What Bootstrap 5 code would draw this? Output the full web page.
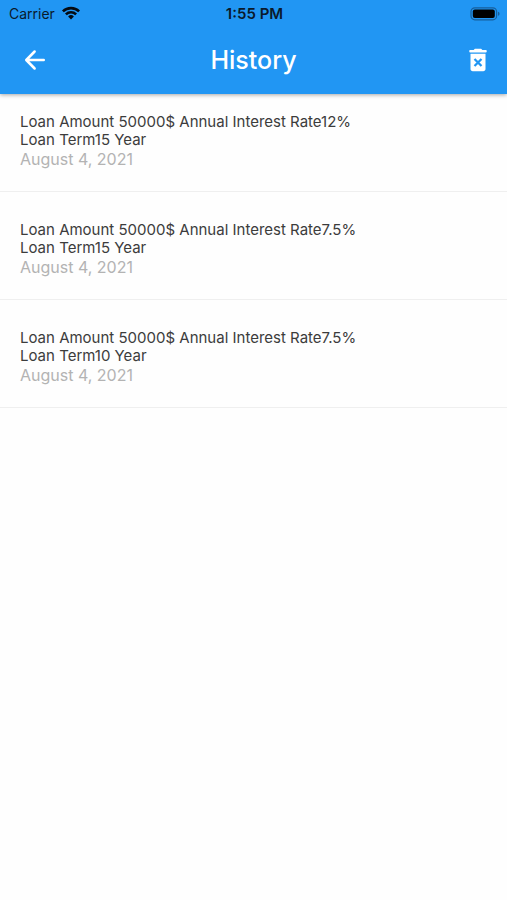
<!DOCTYPE html>
<html lang="en">
<head>
<meta charset="utf-8">
<meta name="viewport" content="width=device-width, initial-scale=1">
<title>History</title>
<link href="https://cdn.jsdelivr.net/npm/bootstrap@5.3.0/dist/css/bootstrap.min.css" rel="stylesheet">
<style>
body { font-family: Inter, "Liberation Sans", sans-serif; background: #fefefe; }
.app-header { background: #2196f3; box-shadow: 0 1px 4px rgba(0, 0, 0, .35); }
.status-bar { height: 27px; padding: 0 7px 0 9px; font-size: 14px; line-height: 27px; color: #0a1a2c; }
.status-time { font-size: 15px; font-weight: 600; }
.status-left { gap: 6px; }
.title-bar { padding: 11px 7px 12px; }
.title-bar h1 { font-size: 25px; line-height: 32px; font-weight: 500; }
.icon-btn { width: 44px; height: 44px; }
.back-btn { width: 56px; }
.icon-btn svg { width: 30px; height: 30px; }
.history-item { padding: 29px 20px 22px; border-bottom: 1px solid #efefef; }
.history-item:first-child { padding-top: 19px; }
.loan-line { font-size: 15px; line-height: 18px; color: #3c3c3c; }
.loan-date { font-size: 16px; line-height: 20px; color: #b3b3b3; }
</style>
<script src="https://cdn.jsdelivr.net/npm/bootstrap@5.3.0/dist/js/bootstrap.bundle.min.js" defer></script>
</head>
<body>
<header class="app-header position-relative">
  <div class="status-bar row g-0 align-items-center">
    <div class="status-left col d-flex align-items-center">
      <span>Carrier</span>
      <svg width="20" height="16" viewBox="0 0 20 16" fill="none" stroke="#050b12" stroke-width="2.6" aria-hidden="true">
        <path d="M1.9 5.400a11.600 11.600 0 0 1 16.200 0"/>
        <path d="M4.900 8.400a7.300 7.300 0 0 1 10.200 0"/>
        <path d="M10 13.400 7.100 10.500a4.100 4.100 0 0 1 5.800 0Z" fill="#050b12" stroke="none"/>
      </svg>
    </div>
    <div class="col-auto status-time">1:55 PM</div>
    <div class="col d-flex justify-content-end">
      <svg width="30" height="14" viewBox="0 0 30 14" aria-hidden="true">
        <rect x="1" y=".8" width="25.6" height="12" rx="3.8" fill="none" stroke="#175f9c" stroke-width="1.2"/>
        <rect x="2.8" y="2.6" width="22" height="8.4" rx="2" fill="#000"/>
        <path d="M28 4.800c2 .5 2 3.500 0 4Z" fill="#175f9c"/>
      </svg>
    </div>
  </div>
  <div class="title-bar row g-0 align-items-center text-white">
    <div class="col">
      <button type="button" class="icon-btn back-btn btn p-0 border-0 text-white d-flex align-items-center justify-content-center" aria-label="Back">
        <svg viewBox="0 0 24 24" fill="none" stroke="currentColor" stroke-width="2" stroke-linecap="round" stroke-linejoin="round"><path d="M19 12H5.200M11.700 5.200 5 12l6.700 6.800"/></svg>
      </button>
    </div>
    <h1 class="col-auto m-0">History</h1>
    <div class="col d-flex justify-content-end">
      <button type="button" class="icon-btn btn p-0 border-0 text-white d-flex align-items-center justify-content-center" aria-label="Delete history">
        <svg viewBox="0 0 24 24" fill="currentColor"><path d="M5.800 4H8.500l1-1h5l1 1h2.700c.5 0 .8.400.8.900v.3c0 .5-.3.800-.8.800H5.800C5.300 6 5 5.700 5 5.200v-.3c0-.5.3-.9.800-.9ZM6 7h12v12.200c0 1-.8 1.800-1.800 1.800H7.800C6.800 21 6 20.200 6 19.200Z"/><path d="m9.200 11.200 5.600 5.600m0-5.600-5.600 5.600" stroke="#2196f3" stroke-width="1.800"/></svg>
      </button>
    </div>
  </div>
</header>
<main>
  <ul class="list-unstyled m-0">
    <li class="history-item">
      <div class="loan-line">Loan Amount 50000$ Annual Interest Rate12%</div>
      <div class="loan-line">Loan Term15 Year</div>
      <div class="loan-date">August 4, 2021</div>
    </li>
    <li class="history-item">
      <div class="loan-line">Loan Amount 50000$ Annual Interest Rate7.5%</div>
      <div class="loan-line">Loan Term15 Year</div>
      <div class="loan-date">August 4, 2021</div>
    </li>
    <li class="history-item">
      <div class="loan-line">Loan Amount 50000$ Annual Interest Rate7.5%</div>
      <div class="loan-line">Loan Term10 Year</div>
      <div class="loan-date">August 4, 2021</div>
    </li>
  </ul>
</main>
</body>
</html>
